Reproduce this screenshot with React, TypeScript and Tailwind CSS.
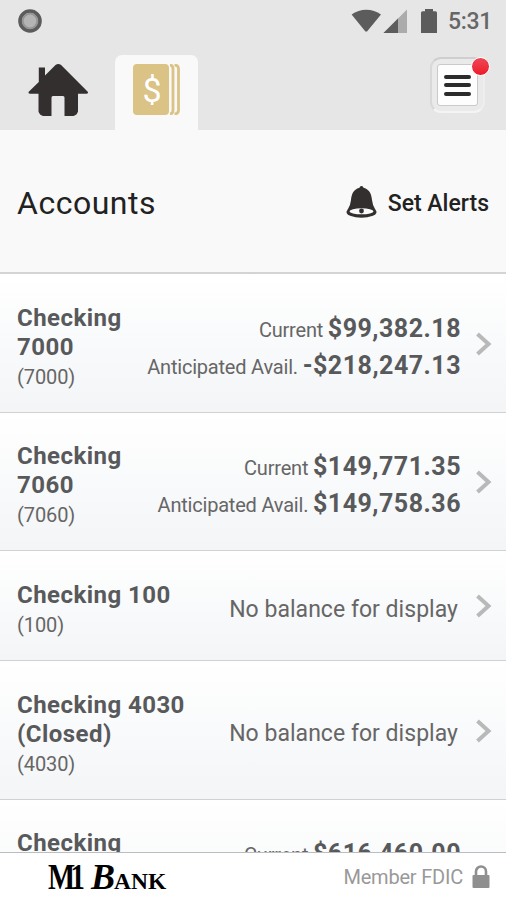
type Account = {
  name: string[];
  number: string;
  current?: string;
  available?: string;
};

const accounts: Account[] = [
  { name: ["Checking", "7000"], number: "7000", current: "$99,382.18", available: "-$218,247.13" },
  { name: ["Checking", "7060"], number: "7060", current: "$149,771.35", available: "$149,758.36" },
  { name: ["Checking 100"], number: "100" },
  { name: ["Checking 4030", "(Closed)"], number: "4030" },
  { name: ["Checking", "7080"], number: "7080", current: "$616,460.00", available: "$616,460.00" },
];

function StatusBar() {
  return (
    <div className="flex h-[41px] items-center justify-between pr-[14px] pl-[18px]">
      <svg width="24" height="24" viewBox="0 0 24 24">
        <circle cx="12" cy="12" r="10" fill="#b4b4b4" stroke="#5c5c5c" strokeWidth="3.6" />
        <circle cx="12" cy="12" r="7.2" fill="none" stroke="#939393" strokeWidth="1.6" />
      </svg>
      <div className="flex items-center">
        <svg width="88" height="26" viewBox="350 7 88 26">
          <path d="M351.6 13.5C360 7 372.5 7 381 13.5L367 30.5h-1.6Z" fill="#5c5c5c" />
          <path d="M383.5 32L407 8.5V32Z" fill="#ababab" />
          <path d="M383.5 32L398 17.5V32Z" fill="#5c5c5c" />
          <path d="M425 8h8v2.2h2.4q1.6 0 1.6 1.6V32h-16V11.8q0-1.6 1.6-1.6H425Z" fill="#5c5c5c" />
        </svg>
        <span className="ml-[10px] pt-[2px] text-[23px] leading-none font-medium tracking-[-0.3px] text-[#666]">5:31</span>
      </div>
    </div>
  );
}

function Header() {
  return (
    <header className="h-[130px] shrink-0 bg-[#e6e6e6]">
      <StatusBar />
      <div className="flex h-[89px]">
        <div className="w-[115px] pt-[22px] pl-[28px]">
          <svg width="61" height="54" viewBox="0 0 61 54" fill="#332f2e">
            <path d="M27.5 2.1Q30.300 0 33.1 2.1L60 29q.5 1.800-1.500 1.800H50V48.500Q49 52 45.500 53H36.500V34.500q0-1.500-1.500-1.500H25q-1.500 0-1.500 1.500V53H15Q11.500 52 10.500 48.500V30.800H2Q0 30.800.5 29L10.800 19V4.500H17V12.500Z" />
          </svg>
        </div>
        <div className="mt-[14px] w-[83px] rounded-t-[7px] bg-[#f9f9f9] pt-[9px] pl-[18px]">
          <div className="flex gap-[1px]">
            <div className="flex h-[51px] w-[36px] items-center justify-center rounded-[4px] bg-[#dbc285] pl-[2px] text-[34px] leading-none text-white">
              $
            </div>
            <svg width="11" height="51" viewBox="0 0 11 51" fill="none" stroke="#dbc285" strokeWidth="2.800">
              <path d="M0 1.200Q3 1.200 3 5V46Q3 49.800 0 49.800" />
              <path d="M4.500 1.200Q8.500 1.200 8.500 5V46Q8.500 49.800 4.500 49.800" />
            </svg>
          </div>
        </div>
        <div className="mt-[16px] mr-[21px] ml-auto">
          <div className="relative h-[56px] w-[55px] rounded-[11px] border-2 border-t-[#cfcfcf] border-r-[#eeeeee] border-b-[#f4f4f4] border-l-[#d8d8d8] bg-[#eaeaea] p-[5px]">
            <div className="flex h-[42px] w-[41px] flex-col items-center justify-center gap-[4.5px] rounded-[3px] border border-[#cacaca] bg-[#fdfdfd]">
              <span className="h-[4px] w-[27px] rounded-full bg-[#2b2b2b]" />
              <span className="h-[4px] w-[27px] rounded-full bg-[#2b2b2b]" />
              <span className="h-[4px] w-[27px] rounded-full bg-[#2b2b2b]" />
            </div>
            <span className="absolute -top-[2px] -right-[7px] h-[19px] w-[19px] rounded-full border-[1.5px] border-white bg-linear-to-b from-[#ed4655] to-[#ee1428]" />
          </div>
        </div>
      </div>
    </header>
  );
}

function Bell() {
  return (
    <svg width="31" height="34" viewBox="0 0 31 34" fill="#332f2e">
      <ellipse cx="15.500" cy="27" rx="15" ry="5.800" />
      <path d="M15.500 1q1.800 0 2 1.800C24 4.500 25.500 10 26 15Q26.400 20 29.500 25H1.500Q4.600 20 5 15C5.500 10 7 4.500 13.500 2.800Q13.700 1 15.500 1Z" />
      <ellipse cx="15.500" cy="26.300" rx="12" ry="3" fill="#fafafa" />
      <circle cx="15.500" cy="26" r="2.400" />
    </svg>
  );
}

function AccountRow({ account }: { account: Account }) {
  return (
    <li className="flex shrink-0 border-b border-[#cfd1d3] bg-linear-to-b from-white to-[#f3f5f7] pt-[29.5px] pr-[14px] pb-[20.2px] pl-[17px] text-[#58595b]">
      <div className="shrink-0">
        {account.name.map((line) => (
          <p key={line} className="text-[24px] leading-[29px] font-bold tracking-[0.45px]">{line}</p>
        ))}
        <p className="text-[20px] leading-[30px] tracking-[-0.1px] text-[#666]">({account.number})</p>
      </div>
      <div className="ml-auto flex items-center">
        {account.current ? (
          <div className="text-right text-[20px] leading-[36px] whitespace-nowrap">
            <p>
              <span className="tracking-[-0.2px] text-[#666]">Current </span>
              <b className="text-[25px] tracking-[0.5px]">{account.current}</b>
            </p>
            <p>
              <span className="tracking-[-0.2px] text-[#666]">Anticipated Avail. </span>
              <b className="text-[25px] tracking-[0.5px]">{account.available}</b>
            </p>
          </div>
        ) : (
          <p className="mr-[3px] mb-[1px] text-[23px] tracking-[0.03px] text-[#666]">No balance for display</p>
        )}
        <svg className="mb-[8px] ml-[15px]" width="16" height="24" viewBox="0 0 16 24" fill="none" stroke="#b9b9b9" strokeWidth="4">
          <path d="M1.500 2L12.500 12L1.500 22" />
        </svg>
      </div>
    </li>
  );
}

export default function App() {
  return (
    <div className="flex h-[900px] w-[506px] flex-col overflow-hidden bg-[#f9f9f9] font-[Roboto,sans-serif]">
      <Header />
      <div className="flex h-[144px] shrink-0 items-center justify-between border-b-2 border-[#d3d5d5] pr-[17px] pl-[17px]">
        <h1 className="pt-[4px] text-[32px] tracking-[0.5px] text-[#222]">Accounts</h1>
        <div className="flex items-center gap-[11px] pt-[2px]">
          <Bell />
          <span className="pt-[4px] text-[23px] font-medium text-[#222]">Set Alerts</span>
        </div>
      </div>
      <ul className="flex h-[578px] shrink-0 flex-col overflow-hidden">
        {accounts.map((account, i) => (
          <AccountRow key={i} account={account} />
        ))}
      </ul>
      <footer className="flex flex-1 items-center justify-between border-t border-[#bdbdbd] bg-white pr-[16px] pl-[48px]">
        <div className="flex items-baseline font-['Liberation_Serif',serif] text-[36px] leading-none font-bold text-black">
          <span className="w-[43px] origin-left scale-x-80 tracking-[-6px]">M1</span>
          <span className="w-[23px] italic">B</span>
          <span className="text-[23.5px]">ANK</span>
        </div>
        <div className="flex items-center gap-[9px] text-[20px] tracking-[-0.2px] text-[#999]">
          Member FDIC
          <svg width="18" height="23" viewBox="0 0 18 23">
            <path d="M4 11V6.500a5 5 0 0 1 10 0V11" fill="none" stroke="#8f8f8f" strokeWidth="2.600" />
            <rect x="0.500" y="10" width="17" height="13" rx="1" fill="#8f8f8f" />
          </svg>
        </div>
      </footer>
    </div>
  );
}
